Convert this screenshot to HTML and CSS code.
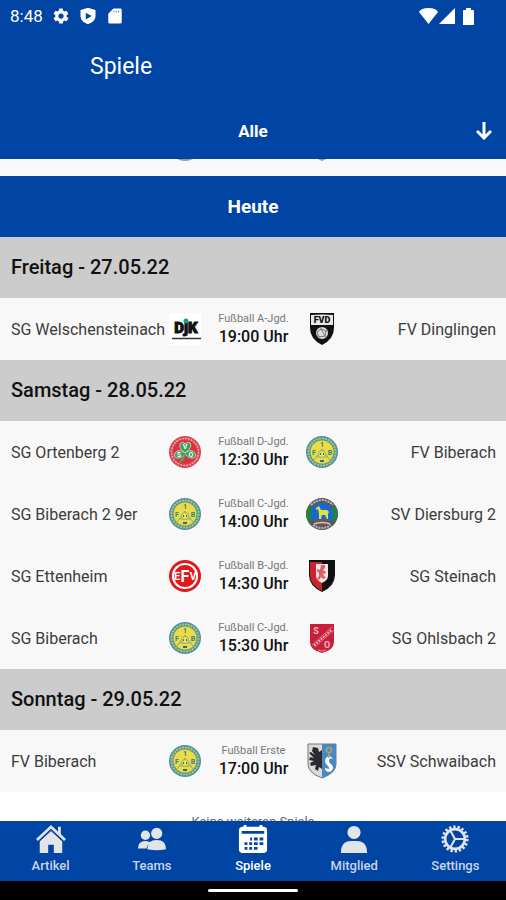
FILE: index.html
```html
<!DOCTYPE html>
<html lang="de">
<head>
    <meta charset="UTF-8">
    <meta name="viewport" content="width=device-width, initial-scale=1.0">
    <title>Spiele</title>
    <link rel="stylesheet" href="styles.css">
</head>
<body>
    <!-- Club crest used more than once -->
    <svg class="defs" aria-hidden="true">
        <symbol id="biberach" viewBox="0 0 32 32">
            <circle cx="16" cy="16" r="16" fill="#4b93a8"/>
            <circle cx="16" cy="16" r="13.5" fill="none" stroke="#b9c362" stroke-width="2" stroke-dasharray="2 1"/>
            <circle cx="16" cy="16" r="11.5" fill="#ebdc45"/>
            <path d="M16 13L8 24M16 13l8 11M10 21h12" fill="none" stroke="#8fae7c"/>
            <circle cx="16" cy="18" r="3.5" fill="#f3e34a" stroke="#8fae7c"/>
            <path d="M14 18h1M17 18h1M14 25h4" stroke="#2d6a87" stroke-width="2"/>
            <g fill="#397f8d" font-size="7" font-weight="700" text-anchor="middle">
                <text x="16" y="11">1</text>
                <text x="8" y="19">F</text>
                <text x="24" y="19">B</text>
            </g>
        </symbol>
    </svg>

    <div class="app">
        <header class="header">
            <div class="status-bar">
                <span>8:48</span>
                <svg width="18" height="18" viewBox="0 0 24 24" fill="#fff"><path fill-rule="evenodd" d="M19.4 13a7.5 7.5 0 0 0 0-2l2.1-1.6a.5.5 0 0 0 .1-.6l-2-3.5a.5.5 0 0 0-.6-.2l-2.5 1a7.3 7.3 0 0 0-1.7-1L14.4 2.4a.5.5 0 0 0-.5-.4h-4a.5.5 0 0 0-.5.4L9.1 5.1a7.7 7.7 0 0 0-1.7 1l-2.5-1a.5.5 0 0 0-.6.2l-2 3.5a.5.5 0 0 0 .1.6L4.5 11a7.9 7.9 0 0 0 0 2l-2.1 1.6a.5.5 0 0 0-.1.6l2 3.5c.1.2.4.3.6.2l2.5-1a7.3 7.3 0 0 0 1.7 1l.4 2.7c0 .2.2.4.5.4h4c.2 0 .5-.2.5-.4l.4-2.7a7.7 7.7 0 0 0 1.7-1l2.5 1c.2.1.5 0 .6-.2l2-3.5a.5.5 0 0 0-.1-.6zM12 15.500a3.5 3.5 0 1 1 0-7 3.5 3.5 0 0 1 0 7z"/></svg>
                <svg width="18" height="18" viewBox="0 0 24 24" fill="#fff"><path fill-rule="evenodd" d="M12 1L2 4v8c0 5 4 9 10 11 6-2 10-6 10-11V4zM9 7.5l8 4.5-8 4.5z"/></svg>
                <svg width="18" height="18" viewBox="0 0 24 24" fill="#fff"><path fill-rule="evenodd" d="M20 2H10L3 9v11a2 2 0 0 0 2 2h14a2 2 0 0 0 2-2V4zM10 5v2h1V5zM13 5v2h1V5zM16 5v2h1V5z"/></svg>
                <span class="signals">
                    <svg width="19" height="16" viewBox="0 0 19 16" fill="#fff"><path d="M0 4Q2 0 9.5 0T19 4L9.5 16z"/></svg>
                    <svg width="16" height="16" viewBox="0 0 16 16" fill="#fff"><path d="M16 0v16H0z"/></svg>
                    <svg class="battery" width="11" height="17" viewBox="0 0 11 17" fill="#fff"><path d="M3 2V0h5v2h2q1 0 1 1v14H0V3q0-1 1-1z"/></svg>
                </span>
            </div>
            <h1>Spiele</h1>
            <button class="filter" type="button">
                <span>Alle</span>
                <svg width="16" height="18" viewBox="0 0 16 18" fill="none" stroke="#fff" stroke-width="3"><path d="M8 0v16M1 9l7 7 7-7"/></svg>
            </button>
        </header>

        <main class="games">
            <!-- Last game before today, only the lower edge of its crests is in view -->
            <div class="past">
                <div class="game">
                    <span></span>
                    <svg class="crest" viewBox="0 0 32 32"><circle cx="16" cy="16" r="16" fill="#999"/></svg>
                    <span></span>
                    <svg class="crest" viewBox="0 0 32 32"><path d="M4 0h24v18q0 9-12 14Q4 27 4 18z" fill="#999"/></svg>
                </div>
            </div>

            <h2 class="today">Heute</h2>

            <h3 class="day">Freitag - 27.05.22</h3>
            <div class="game">
                <span class="team">SG Welschensteinach</span>
                <svg class="crest" viewBox="0 0 32 32">
                    <path d="M0 0h32v32H0z" fill="#fff"/>
                    <text x="17" y="20" fill="#111" stroke="#111" font-size="15" font-weight="900" text-anchor="middle">DjK</text>
                    <circle cx="17" cy="8" r="2.5" fill="#18a176"/>
                    <path d="M3 25.5h29" stroke="#333" stroke-width="1.5"/>
                </svg>
                <div class="info"><span class="league">Fußball A-Jgd.</span><strong class="time">19:00 Uhr</strong></div>
                <svg class="crest" viewBox="0 0 32 32">
                    <path d="M4 0q12-1 24 0v15q0 11-12 17Q4 26 4 15z" fill="#111"/>
                    <path d="M5 2q11-1 22 0v10H5z" fill="#e8e8e8"/>
                    <text x="16" y="10" fill="#111" font-size="9" font-weight="900" text-anchor="middle">FVD</text>
                    <circle cx="16" cy="20" r="6" fill="#ddd"/>
                    <path d="M11 19l4-3 5 2-1 5-6 1zM15 16v-2M20 18l2-1M13 24l-2-1M19 23l1 2M15 16l4 7" fill="none" stroke="#777"/>
                </svg>
                <span class="team guest">FV Dinglingen</span>
            </div>

            <h3 class="day">Samstag - 28.05.22</h3>
            <div class="game">
                <span class="team">SG Ortenberg 2</span>
                <svg class="crest" viewBox="0 0 32 32">
                    <circle cx="16" cy="16" r="16" fill="#d84450"/>
                    <circle cx="16" cy="16" r="13.5" fill="none" stroke="#eea6a8" stroke-width="1.5" stroke-dasharray="2 1"/>
                    <circle cx="16" cy="16" r="11.5" fill="#d9323d"/>
                    <g fill="#35a057" stroke="#d9e3c9" stroke-width=".8"><path d="M16 17Q8 11 12 7q3-2 4 1 2-3 5-1 3 4-5 10z"/><path d="M16 17q-7-5-10 0-2 4 2 5 5 1 8-5zM16 17q7-5 10 0 2 4-2 5-5 1-8-5z"/></g>
                    <path d="M16 17q-1 6-5 9" fill="none" stroke="#49a960" stroke-width="2"/>
                    <g fill="#fff" font-size="7" font-weight="700" text-anchor="middle">
                        <text x="16" y="13">V</text>
                        <text x="10" y="21">S</text>
                        <text x="22" y="21">O</text>
                    </g>
                </svg>
                <div class="info"><span class="league">Fußball D-Jgd.</span><strong class="time">12:30 Uhr</strong></div>
                <svg class="crest"><use href="#biberach"/></svg>
                <span class="team guest">FV Biberach</span>
            </div>
            <div class="game">
                <span class="team">SG Biberach 2 9er</span>
                <svg class="crest"><use href="#biberach"/></svg>
                <div class="info"><span class="league">Fußball C-Jgd.</span><strong class="time">14:00 Uhr</strong></div>
                <svg class="crest" viewBox="0 0 32 32">
                    <circle cx="16" cy="16" r="16" fill="#54575d"/>
                    <path d="M3 8q-6 8 0 16l5-3V11zM29 8q6 8 0 16l-5-3V11z" fill="#23833e"/>
                    <path d="M5 7Q16-3 27 7M7 27q9 6 18 0" fill="none" stroke="#b7b9bb" stroke-width="2" stroke-dasharray="2 1"/>
                    <circle cx="16" cy="16" r="11" fill="#1769d2"/>
                    <path d="M7 23q9-4 18 0l-2 3q-7 3-14 0z" fill="#79514d"/>
                    <path d="M8 26q8-3 16 0" fill="none" stroke="#d6c9bc" stroke-width="1.5"/>
                    <path d="M10 10l3-2 2 4h6l2 2-1 2v5h-1l-2-4h-3l-1 4h-2v-5l-1-5-2 1z" fill="#e4df45"/>
                </svg>
                <span class="team guest">SV Diersburg 2</span>
            </div>
            <div class="game">
                <span class="team">SG Ettenheim</span>
                <svg class="crest" viewBox="0 0 32 32">
                    <circle cx="16" cy="16" r="16" fill="#e3181d"/>
                    <circle cx="16" cy="16" r="12" fill="none" stroke="#fff" stroke-width="2.2"/>
                    <g fill="#fff" font-weight="700" text-anchor="middle">
                        <text x="8" y="20" font-size="11">E</text>
                        <text x="16" y="22" font-size="16">F</text>
                        <text x="24" y="20" font-size="10">V</text>
                    </g>
                </svg>
                <div class="info"><span class="league">Fußball B-Jgd.</span><strong class="time">14:30 Uhr</strong></div>
                <svg class="crest" viewBox="0 0 32 32">
                    <path d="M3 0h26v15q0 11-13 17Q3 26 3 15z" fill="#111"/>
                    <path d="M4 2h12v29Q4 25 4 15z" fill="#c9252f"/>
                    <path d="M10 4h12v12q0 4-6 7-6-3-6-7z" fill="#f6e5e5"/>
                    <path d="M15 5h4v3l-2 2 3 2-1 2-2-1 1 3 2 2-3 1-2-2-2 3-2-1 2-3v-3l-2-2v-2l3 1z" fill="#d9606a"/>
                </svg>
                <span class="team guest">SG Steinach</span>
            </div>
            <div class="game">
                <span class="team">SG Biberach</span>
                <svg class="crest"><use href="#biberach"/></svg>
                <div class="info"><span class="league">Fußball C-Jgd.</span><strong class="time">15:30 Uhr</strong></div>
                <svg class="crest" viewBox="0 0 32 32">
                    <path d="M4 2h24v18q0 8-12 11Q4 28 4 20z" fill="#c91f3b"/>
                    <path d="M6 23L26 5M9 25L28 8" stroke="#dc7b8a"/>
                    <path d="M8 23.5L26 7.5" stroke="#f0b4bd" stroke-width="2" stroke-dasharray="2 1"/>
                    <g fill="#f0b9c1" font-size="9" font-weight="700" text-anchor="middle">
                        <text x="10" y="12">S</text>
                        <text x="21" y="26">O</text>
                    </g>
                    <path d="M12 28q4 2 8 0" fill="none" stroke="#e28d9a"/>
                </svg>
                <span class="team guest">SG Ohlsbach 2</span>
            </div>

            <h3 class="day">Sonntag - 29.05.22</h3>
            <div class="game">
                <span class="team">FV Biberach</span>
                <svg class="crest"><use href="#biberach"/></svg>
                <div class="info"><span class="league">Fußball Erste</span><strong class="time">17:00 Uhr</strong></div>
                <svg class="crest tall" viewBox="0 0 32 36">
                    <path d="M2 1h28v20q0 9-14 14Q2 30 2 21z" fill="#d9dbda" stroke="#777"/>
                    <path d="M16 1h14v20q0 9-14 14z" fill="#4b87c2"/>
                    <path d="M7 4l5 1 1 4 3-2v19l-3-2-1 4-3-2 1-4-5 1-1-3 4-2-5-1 1-3 4 1-5-5 2-1 4 3-3-4z" fill="#292b30"/>
                    <path d="M27 16q-4-2-4 2 0 2 3 4 3 4-2 7-5 0-5-4l4 1q1-1-2-4-4-5 0-8 4-2 6 2z" fill="#fff"/>
                    <circle cx="23" cy="7" r="2.5" fill="none" stroke="#a9a467" stroke-width="1.5"/>
                    <path d="M23 9v6" stroke="#a9a467" stroke-width="1.5"/>
                </svg>
                <span class="team guest">SSV Schwaibach</span>
            </div>

            <p class="end">Keine weiteren Spiele</p>
        </main>

        <nav class="tabs">
            <a href="#artikel">
                <svg viewBox="0 0 32 32"><path d="M1 17L16 3l15 14M25 3v8" fill="none" stroke="#e3e4e8" stroke-width="3"/><path d="M4 18L16 7l12 11v13h-9v-9h-6v9H4z" fill="#e3e4e8"/><path d="M3 19L16 7l13 12" fill="none" stroke="#0045a3"/></svg>
                Artikel
            </a>
            <a href="#teams">
                <svg viewBox="0 0 32 32" fill="#e3e4e8"><circle cx="9" cy="12" r="5"/><path d="M1 26q0-8 8-8 4 0 5 2-3 2-4 6z"/><circle cx="21" cy="10" r="6"/><path d="M11 27q0-10 10-10t10 10q-10 2-20 0z"/></svg>
                Teams
            </a>
            <a class="active" href="#spiele">
                <svg viewBox="0 0 32 32">
                    <path d="M6 1h3v2h14V1h3v2h1q4 0 4 4v20q0 4-4 4H5q-4 0-4-4V7q0-4 4-4h1z" fill="#fff"/>
                    <path d="M4 9h24M13 16h14M7 21h20M7 26h14" stroke="#0045a3" stroke-width="3"/>
                    <path d="M11 14v14M16 14v14M22 14v14" stroke="#fff" stroke-width="2"/>
                </svg>
                Spiele
            </a>
            <a href="#mitglied">
                <svg viewBox="0 0 32 32" fill="#e3e4e8"><circle cx="16" cy="9" r="7"/><path d="M2 31q0-13 11-13h6q11 0 11 13z"/></svg>
                Mitglied
            </a>
            <a href="#settings">
                <svg viewBox="0 0 32 32" fill="none" stroke="#e3e4e8"><circle cx="16" cy="16" r="13" stroke-width="3" stroke-dasharray="2.5 2.037"/><circle cx="16" cy="16" r="10.5" stroke-width="2.8"/><path d="M16 16h10M16 16l-5-9M16 16l-5 9" stroke-width="2.2"/></svg>
                Settings
            </a>
        </nav>
        <div class="home-bar"><span></span></div>
    </div>
</body>
</html>
```

FILE: styles.css
```css
/* Global Styles for the Page */
* {
    box-sizing: border-box;
}

body {
    margin: 0;
    font-family: Roboto, sans-serif;
    color: #111;
    background-color: #fff;
}

.defs {
    display: none;
}

.app {
    display: flex;
    flex-direction: column;
    height: 100vh;
}

/* Header */
.header {
    background-color: #0045a3;
    color: #fff;
}

.status-bar {
    display: flex;
    align-items: center;
    gap: 9px;
    height: 32px;
    padding: 0 32px 0 10px;
    font-size: 17px;
}

.signals {
    display: flex;
    align-items: center;
    gap: 1px;
    margin-left: auto;
}

.battery {
    margin-left: 7px;
}

.header h1 {
    margin: 0;
    padding: 0 90px;
    font-size: 23px;
    font-weight: 400;
    line-height: 70px;
}

.filter {
    display: grid;
    grid-template-columns: 1fr auto 1fr;
    align-items: center;
    width: 100%;
    height: 57px;
    padding: 0 14px;
    border: none;
    background: none;
    color: #fff;
    font-family: inherit;
    font-size: 17px;
    font-weight: 700;
    cursor: pointer;
}

.filter span {
    grid-column: 2;
}

.filter svg {
    justify-self: end;
}

/* Games */
.games {
    flex: 1;
    min-height: 0;
    overflow: hidden;
}

.past {
    display: flex;
    flex-direction: column;
    justify-content: flex-end;
    height: 17px;
    overflow: hidden;
}

.past .game {
    flex-shrink: 0;
}

.today {
    margin: 0;
    background-color: #0045a3;
    color: #fff;
    font-size: 19px;
    font-weight: 700;
    line-height: 61px;
    text-align: center;
}

.day {
    margin: 0;
    padding: 0 11px;
    background-color: #ccc;
    font-size: 20px;
    font-weight: 500;
    line-height: 61px;
}

.game {
    display: grid;
    grid-template-columns: 1fr 32px 105px 32px 1fr;
    align-items: center;
    height: 62px;
    padding: 0 10px 0 11px;
    background-color: #f8f8f8;
}

.team {
    color: #3c3c3c;
    font-size: 16px;
    white-space: nowrap;
}

.guest {
    text-align: right;
}

.crest {
    width: 32px;
    height: 32px;
}

.tall {
    height: 36px;
}

.info {
    display: flex;
    flex-direction: column;
    align-items: center;
}

.league {
    color: #777;
    font-size: 11px;
    line-height: 16px;
}

.time {
    font-size: 16px;
    font-weight: 500;
    line-height: 20px;
}

.end {
    margin: 0;
    padding-top: 22px;
    color: #666;
    font-size: 13px;
    text-align: center;
}

/* Bottom Navigation */
.tabs {
    display: grid;
    grid-template-columns: repeat(5, 1fr);
    height: 60px;
    background-color: #0045a3;
}

.tabs a {
    display: flex;
    flex-direction: column;
    align-items: center;
    gap: 3px;
    padding-top: 3px;
    color: #cbd3ea;
    font-size: 13px;
    font-weight: 500;
    line-height: 18px;
    text-decoration: none;
}

.tabs svg {
    width: 30px;
    height: 30px;
}

.tabs .active {
    color: #fff;
}

.home-bar {
    display: flex;
    justify-content: center;
    align-items: center;
    height: 19px;
    background-color: #000;
}

.home-bar span {
    width: 90px;
    height: 3px;
    border-radius: 2px;
    background-color: #fff;
}
```
